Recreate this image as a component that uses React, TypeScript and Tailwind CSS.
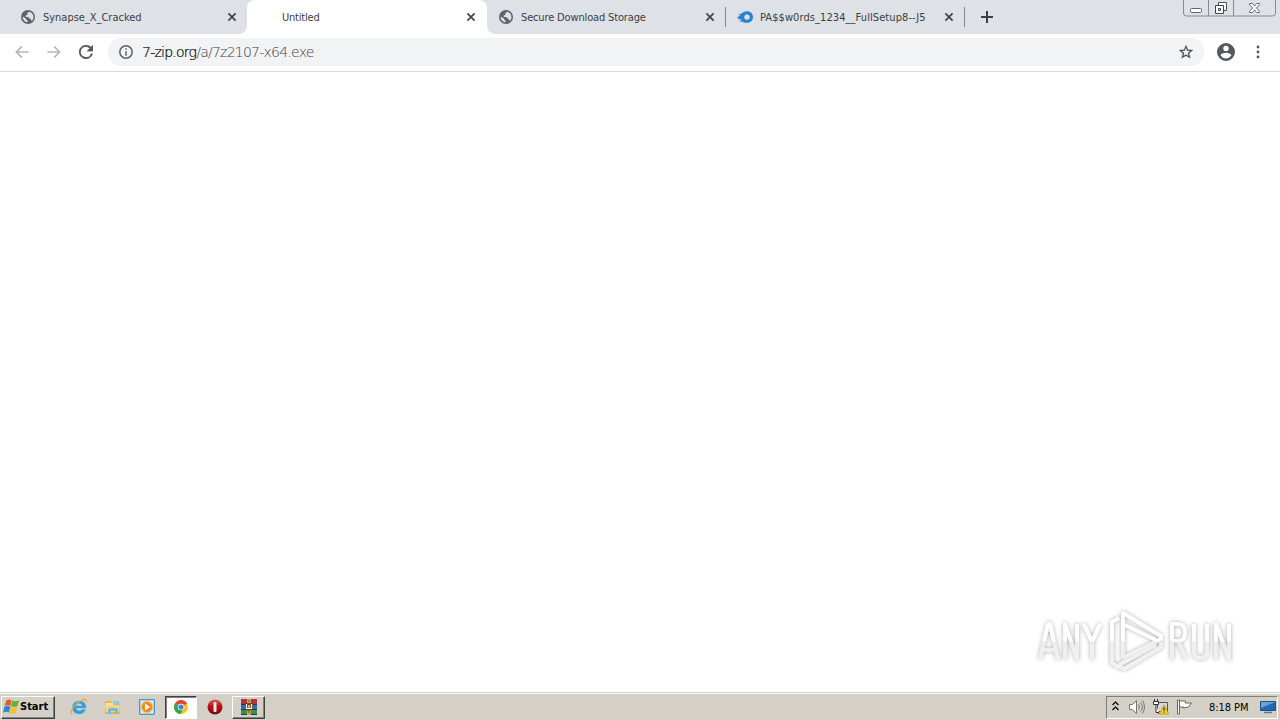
import React from "react";

const Globe = () => (
  <svg className="h-[14px] w-[14px]" viewBox="0 0 14 14">
    <circle cx="7" cy="7" r="7" fill="#5f6368" />
    <path d="M8.2 1.7 6.3 3.3v1.4L4.4 5.8l.5 1.2h2.3l.9 1.3 1.6.4.2 1.5 1.3.5A5.6 5.6 0 0 0 8.2 1.7ZM1.6 6.6l3.2 2 .5 1.2 1.2.7v1.9A5.6 5.6 0 0 1 1.6 6.6Z" fill="#dee1e6" />
  </svg>
);

const Flame = () => (
  <svg className="h-[14px] w-4" viewBox="0 0 16 14">
    <path fillRule="evenodd" d="M0 7.7C1.3 6.4 2.5 6 3.300 5.500L1.500 4.500C4.800 4.500 5.700 1.300 10 1.300c3.600 0 6 2.400 6 5.700s-2.500 5.800-6 5.800c-3 0-4.200-1.400-5.700-1.400H1.800C3.800 10.800 4 10.100 4.600 9.300 3 9.600 1.800 9 .1 8.900L2.300 8 0 7.700Zm7.300-.5c0 1.700 1 2.500 2.700 2.500s2.700-.8 2.700-2.500S11.700 4.500 10 4.500 7.300 5.500 7.300 7.200Z" fill="#2b80d3" />
  </svg>
);

const Close = () => (
  <svg className="h-[10px] w-[10px] shrink-0" viewBox="0 0 10 10">
    <path d="m1.400 1.400 7.200 7.200m0-7.200L1.400 8.600" stroke="#3f4247" strokeWidth="1.700" />
  </svg>
);

function Tab({ title, icon, active = false, spacing, className }: { title: string; icon?: React.ReactNode; active?: boolean; spacing: string; className: string }) {
  return (
    <div className={`flex h-[34px] shrink-0 items-center ${active ? "bg-white" : "bg-[#dee1e6]"} ${className}`}>
      <span className="flex w-[22px] shrink-0 items-center">{icon}</span>
      <span className={`flex-1 pt-px text-[11px] leading-[15px] whitespace-nowrap text-[#3c4043] ${spacing}`}>{title}</span>
      <Close />
    </div>
  );
}

const WindowButtons = () => (
  <svg className="h-[17px] w-[94px]" viewBox="0 0 94 17" fill="none">
    <path d="M.5 0v13q0 3 3 3h86q3 0 3-3V0M25.500 0v16M50.500 0v16" stroke="#858a96" />
    <rect x="7.500" y="8.500" width="11" height="4" rx="1" fill="#fff" stroke="#62656f" />
    <path d="M35.500 2.500h8v8h-8z" fill="#fff" stroke="#4e515c" />
    <path d="M32.500 5.500h8v8h-8z" fill="#fff" stroke="#3e414c" />
    <path d="M35.500 8.500h2v2h-2z" stroke="#3e414c" />
    <path d="M66.500 3.500h3l2 2.500 2-2.500h3v1.200L73.400 8l3.100 3.300v1.200h-3l-2-2.500-2 2.500h-3v-1.200L69.600 8l-3.100-3.300z" fill="#fff" stroke="#686b75" />
  </svg>
);

const Watermark = () => (
  <svg className="h-[72px] w-[208px]" viewBox="0 0 208 72" fill="none">
    <defs>
      <linearGradient id="fade" x1="0" y1="0" x2="0" y2="72" gradientUnits="userSpaceOnUse">
        <stop offset="0.55" stopColor="#ffffff" />
        <stop offset="0.57" stopColor="#eeeeee" />
        <stop offset="1" stopColor="#f3f3f3" />
      </linearGradient>
      <filter id="shade" x="-10%" y="-10%" width="120%" height="120%">
        <feDropShadow dx="0" dy="0" stdDeviation="2" floodColor="#000" floodOpacity="0.360" />
      </filter>
    </defs>
    <g filter="url(#shade)" stroke="url(#fade)" strokeWidth="3.600" strokeLinejoin="round">
      <path d="m12 58 8-35h2l8 35M15 49h12" />
      <path d="M37 58V23l12 35V23" />
      <path d="m56 23 8 18 8-18M64 41v17" />
      <path d="M144 58V23h6q7 0 7 8.500t-7 8.500h-6m6 0 8 18" />
      <path d="M166 23v27q0 7 6.500 7t6.500-7V23" />
      <path d="M188 58V23l13 35V23" />
      <path d="M95 57V12l38 23v3L95 57" />
      <path d="M91 17l-7 4v41l7 4M97 24l31 15M91 65l5 3 37-22v-5M91 64l37-20" />
    </g>
  </svg>
);

const StartFlag = () => (
  <svg className="h-[18px] w-[17px]" viewBox="0 0 16 16">
    <path d="M3 2q2.500-2 5-.5L7 7Q4.500 5.600 1.700 7z" fill="#e65b2d" />
    <path d="M8.700 1.800q3 1.500 6.500-.1L13.600 7q-3 1.600-6 .2z" fill="#68ae37" />
    <path d="M1.400 7.700q2.800-1.400 5.500 0L5.500 13.300q-2.500-1.500-5.400 0z" fill="#2786d3" />
    <path d="M7.500 7.900q2.800 1.500 5.900 0L12 13.700q-2.800 1.600-5.900 0z" fill="#f4bf28" />
  </svg>
);

const IeIcon = () => (
  <svg className="h-[18px] w-[18px]" viewBox="0 0 18 18" fill="none">
    <path d="M16 10H6q.5 2.700 3.400 2.700 1.800 0 2.700-1.200h3.500Q13.800 16 9.100 16 2.500 16 2.500 9.500T9.200 3q7 0 6.800 7ZM6 7.900h6.300q-.4-2.300-3.100-2.300T6 7.900Z" fill="#319bd9" stroke="#5bb5e7" strokeWidth=".5" />
    <path d="M2.200 16.300C-.7 14.500 3.500 7 9.500 3.300c4.700-3 8-2.500 6.300 1" stroke="#e8ac30" strokeWidth="1.200" />
  </svg>
);

const FolderIcon = () => (
  <svg className="h-[18px] w-[18px]" viewBox="0 0 18 18">
    <path d="M1 3h6l1 2h8v11H1z" fill="#e6b84c" />
    <path d="M2 5h13v9H2z" fill="#f8e5a0" />
    <path d="M9 3h6v4H9z" fill="#8ec9dd" />
    <path d="M1 7h15l-1 7H2z" fill="#f6d77d" />
    <path d="M4 16v-4q0-2 2-2h6q2 0 2 2v4h-3v-3H7v3z" fill="#75b9df" />
  </svg>
);

const PlayerIcon = () => (
  <svg className="h-[18px] w-[18px]" viewBox="0 0 18 18">
    <path d="M1.500 1.500h15v15h-15z" fill="#a8d3ef" stroke="#5294c5" />
    <path d="M3 3h12v12H3z" fill="#d9edf8" />
    <circle cx="9" cy="9" r="5.600" fill="#f18a16" stroke="#ffc05c" />
    <path d="m7 5.600 5 3.400-5 3.400z" fill="#fff" />
  </svg>
);

const ChromeIcon = () => (
  <svg className="h-[14px] w-[14px]" viewBox="0 0 14 14">
    <circle cx="7" cy="7" r="7" fill="#f9c51d" />
    <path d="M7 7 .95 3.500A7 7 0 0 1 13.050 3.500z" fill="#df4435" />
    <path d="M7 7 .95 3.500A7 7 0 0 0 6.500 14L9.500 8.500z" fill="#2ba653" />
    <circle cx="7" cy="7" r="3.300" fill="#fff" />
    <circle cx="7" cy="7" r="2.600" fill="#3e80e8" />
  </svg>
);

const OperaIcon = () => (
  <svg className="h-4 w-4" viewBox="0 0 16 16">
    <defs>
      <linearGradient id="opera" x1="0" y1="0" x2="0" y2="1">
        <stop stopColor="#dc625d" /><stop offset=".4" stopColor="#bd171c" /><stop offset="1" stopColor="#76060c" />
      </linearGradient>
    </defs>
    <circle cx="8" cy="8" r="7.500" fill="url(#opera)" />
    <rect x="6.500" y="3" width="3" height="10" rx="1" fill="#f5e9e8" />
  </svg>
);

const RarIcon = () => (
  <svg className="h-4 w-4" viewBox="0 0 16 16">
    <path d="M0 0h16v5H0z" fill="#b92f42" />
    <path d="M0 5h16v6H0z" fill="#3868bd" />
    <path d="M0 11h16v5H0z" fill="#379344" />
    <path d="M0 5.500h16M0 10.500h16M0 15.500h16" stroke="#29364c" />
    <path d="M6 0h4v4H6zM6 12h4v4H6z" fill="#d7a24d" />
    <path d="M4 4h8v7H4z" fill="#644437" />
    <path d="M5.500 5v4.500h5V5M8 6v3" fill="none" stroke="#fff5d0" strokeWidth="1.200" />
    <path d="M7 2h2M7 13h2" stroke="#6b402b" />
  </svg>
);

const TrayIcons = () => (
  <>
    <svg className="mb-[3px] h-[10px] w-[7px]" viewBox="0 0 7 10" fill="none"><path d="m.5 4 3-3 3 3m-6 5 3-3 3 3" stroke="#111" strokeWidth="1.400" /></svg>
    <svg className="ml-[9px] h-4 w-[17px]" viewBox="0 0 17 16" fill="none">
      <path d="M1.500 5.500h3l4-4v13l-4-4h-3z" fill="#fff" stroke="#777" />
      <path d="M10.500 5.500q2 2.500 0 5M12.500 3.500q4 4.500 0 9M14.500 1.500q4 6.500 0 13" stroke="#777" />
    </svg>
    <svg className="ml-[7px] h-4 w-[17px]" viewBox="0 0 17 16" fill="none">
      <path d="M5.500 3.500h10v9h-10z" fill="#d5d5d5" stroke="#555" />
      <path d="M6 14.500h8" stroke="#666" />
      <path d="M2.500 0v2M5.500 0v2M1.500 2.500h5v3h-5zM4 6v7.500h3" fill="#fff" stroke="#333" />
      <path d="m12 6 4.700 9H7.300z" fill="#f7cf25" stroke="#ba9000" strokeWidth=".7" />
      <path d="M12 8.500v3m0 1v1" stroke="#222" strokeWidth="1.200" />
    </svg>
    <svg className="ml-[7px] h-4 w-[17px]" viewBox="0 0 17 16" fill="none">
      <path d="M1.500 15v-14h2v14z" fill="#fff" stroke="#666" />
      <path d="M3.500 2h6v2h6l-3 4-5 1v-1h-4z" fill="#fff" stroke="#666" />
    </svg>
  </>
);

export default function App() {
  return (
    <div className="flex h-[720px] w-[1280px] flex-col overflow-hidden bg-white font-['DejaVu_Sans_Condensed','DejaVu_Sans',sans-serif] [font-stretch:condensed]">
      <header className="flex h-[34px] shrink-0 bg-[#dee1e6]">
        <div className="flex flex-1">
          <div className="flex bg-white">
            <Tab title="Synapse_X_Cracked" icon={<Globe />} className="w-[247px] rounded-br-lg pr-[10px] pl-[21px]" spacing="tracking-[-0.020px]" />
          </div>
          <Tab title="Untitled" active className="w-[240px] rounded-t-lg pr-[11px] pl-[13px]" spacing="tracking-[-0.200px]" />
          <div className="flex bg-white">
            <Tab title="Secure Download Storage" icon={<Globe />} className="w-[238px] rounded-bl-lg pr-[10px] pl-[12px]" spacing="tracking-[-0.150px]" />
          </div>
          <span className="mt-[7px] h-5 w-px bg-[#85888d]" />
          <Tab title="PA$$w0rds_1234__FullSetup8--J5" icon={<Flame />} className="w-[238px] pr-[10px] pl-[11px]" spacing="ml-[1px] tracking-[0.080px]" />
          <span className="mt-[7px] h-5 w-px bg-[#85888d]" />
          <svg className="mt-[11px] ml-4 h-3 w-3" viewBox="0 0 12 12"><path d="M6 0v12M0 6h12" stroke="#3c4043" strokeWidth="2" /></svg>
        </div>
        <div className="mr-[3px]"><WindowButtons /></div>
      </header>

      <nav className="flex h-[38px] shrink-0 items-center border-b border-[#d9dadc] pb-px pl-[15px]">
        <svg className="h-[14px] w-[14px]" viewBox="0 0 16 16" fill="none"><path d="M15.500 8H2m6-6.500L1.500 8 8 14.500" stroke="#b5b7ba" strokeWidth="1.900" /></svg>
        <svg className="ml-[18px] h-[14px] w-[14px]" viewBox="0 0 16 16" fill="none"><path d="M.5 8H14M8 1.500 14.500 8 8 14.500" stroke="#b5b7ba" strokeWidth="1.900" /></svg>
        <svg className="ml-[18px] h-[14px] w-[14px]" viewBox="4 4 16 16"><path d="M17.650 6.350A8 8 0 1 0 19.730 14h-2.080A6 6 0 1 1 12 6c1.660 0 3.140.69 4.220 1.780L13 11h7V4z" fill="#54575b" stroke="#54575b" strokeWidth=".3" /></svg>
        <div className="ml-[15px] flex h-7 w-[1096px] items-center rounded-full bg-[#f1f3f4] pr-[11px] pl-[11px]">
          <svg className="h-[14px] w-[14px]" viewBox="0 0 14 14" fill="none"><circle cx="7" cy="7" r="6.200" stroke="#5f6368" strokeWidth="1.500" /><path d="M7 3.200v1.600m0 1.400v4.600" stroke="#5f6368" strokeWidth="1.500" /></svg>
          <span className="ml-[9px] flex-1 font-['DejaVu_Sans',sans-serif] text-[14px] leading-5 font-extralight tracking-[-0.760px] text-[#3c4045] [font-stretch:normal]"><span className="text-black [-webkit-text-stroke:0.2px_#000]">7-zip.org</span>/a/7z2107-x64.exe</span>
          <svg className="h-[14px] w-[14px]" viewBox="2 2 20 20"><path d="m22 9.240-7.190-.62L12 2 9.190 8.630 2 9.240l5.460 4.730L5.820 21 12 17.270 18.180 21l-1.630-7.030zM12 15.400l-3.760 2.270 1-4.280-3.320-2.880 4.380-.38L12 6.100l1.710 4.040 4.380.38-3.320 2.880 1 4.280z" fill="#4b4e52" stroke="#4b4e52" strokeWidth=".3" /></svg>
        </div>
        <svg className="ml-[13px] h-[18px] w-[18px]" viewBox="2 2 20 20"><path d="M12 2a10 10 0 1 0 0 20 10 10 0 0 0 0-20m0 3a3 3 0 1 1 0 6 3 3 0 0 1 0-6m0 14.200a7.200 7.200 0 0 1-6-3.220c.03-1.990 4-3.080 6-3.080s5.970 1.090 6 3.080a7.200 7.200 0 0 1-6 3.220" fill="#54575c" /></svg>
        <svg className="ml-[21px] h-[14px] w-1" viewBox="0 0 4 14" fill="#54575c"><circle cx="2" cy="2" r="1.400" /><circle cx="2" cy="7" r="1.400" /><circle cx="2" cy="12" r="1.400" /></svg>
      </nav>

      <main className="flex min-h-0 flex-1 items-end justify-end pr-11 pb-[19px]"><Watermark /></main>

      <footer className="flex h-7 shrink-0 items-center border-t border-[#d4d0c8] bg-[#d4d0c8] pt-px shadow-[inset_0_1px_0_#fff]">
        <button className="ml-px flex h-[23px] w-[54px] items-center border border-[#404040] border-t-white border-l-white bg-[#d4d0c8] pl-px shadow-[inset_-1px_-1px_0_#808080]">
          <StartFlag /><span className="text-[11px] leading-4 font-bold text-black">Start</span>
        </button>
        <div className="ml-[15px] flex"><IeIcon /></div>
        <div className="ml-4 flex"><FolderIcon /></div>
        <div className="ml-4 flex"><PlayerIcon /></div>
        <div className="ml-[9px] flex h-[23px] w-8 items-center justify-center border border-white border-t-[#404040] border-l-[#404040] bg-white shadow-[inset_1px_1px_0_#808080]"><ChromeIcon /></div>
        <div className="ml-[10px] flex"><OperaIcon /></div>
        <div className="ml-[9px] flex h-[23px] w-[33px] items-center justify-center border border-[#404040] border-t-white border-l-white bg-[#d4d0c8] shadow-[inset_-1px_-1px_0_#808080]"><RarIcon /></div>
        <div className="mr-[2px] ml-auto flex h-[23px] w-[172px] items-center border border-white border-t-[#808080] border-l-[#808080] pl-[5px]">
          <TrayIcons />
          <span className="ml-[16px] w-[51px] pt-px text-[11px] leading-4 tracking-[-0.05px] whitespace-nowrap text-black">8:18 PM</span>
          <svg className="h-[14px] w-4" viewBox="0 0 16 14"><path d="M.5 1.500h15v9H.5z" fill="#2467b3" stroke="#254e82" /><path d="M1 2h14L1 8z" fill="#63a5dc" /><path d="M4 12.500h8" stroke="#4b7daf" strokeWidth="1.500" /></svg>
        </div>
      </footer>
    </div>
  );
}
